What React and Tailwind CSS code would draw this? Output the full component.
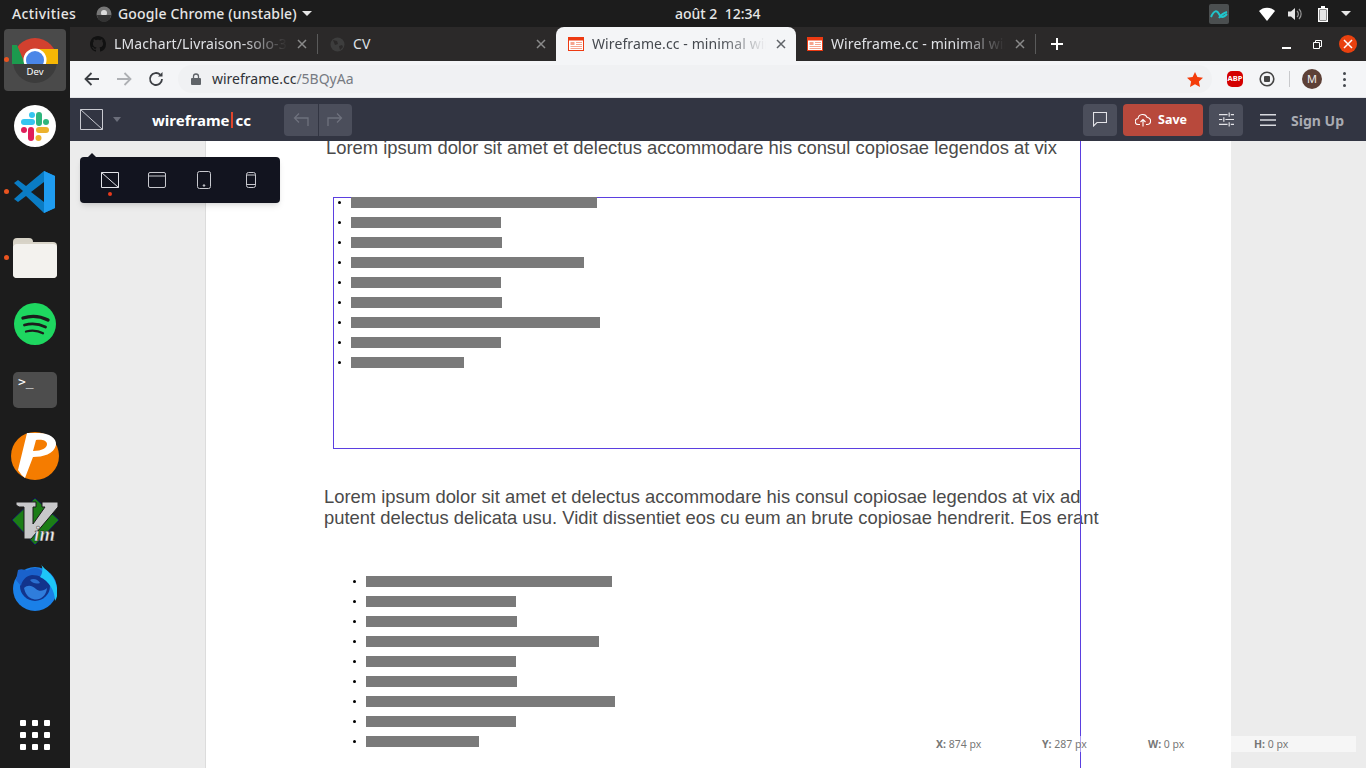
import React from "react";

const UI = { fontFamily: '"Noto Sans", "Open Sans", sans-serif' };
const barWidths = [246, 150, 151, 233, 150, 151, 249, 150, 113];
const LOREM_ONE = "Lorem ipsum dolor sit amet et delectus accommodare his consul copiosae legendos at vix";

const ChromeDev = () => (
  <svg width="46" height="46" viewBox="0 0 46 46">
    <defs>
      <clipPath id="chromeTop">
        <rect x="0" y="0" width="46" height="27" />
      </clipPath>
    </defs>
    <circle cx="23" cy="24" r="22" fill="#3c3c3c" />
    <g clipPath="url(#chromeTop)">
      <circle cx="23" cy="23" r="22" fill="#d2402f" />
      <path d="M24 12H46V27H30z" fill="#f6b705" />
      <path d="M5 8L13 27H0V8z" fill="#1c9a4e" />
      <circle cx="23" cy="23" r="11.500" fill="#fff" />
      <circle cx="23" cy="23" r="9" fill="#4a86e8" />
    </g>
    <text x="23" y="37.500" textAnchor="middle" fontSize="9.500" fill="#fff" fontFamily="Noto Sans">Dev</text>
  </svg>
);

const Slack = () => (
  <svg width="42" height="42" viewBox="0 0 42 42">
    <circle cx="21" cy="21" r="21" fill="#fff" />
    <rect x="22" y="7" width="6" height="14" rx="3" fill="#2eb67d" />
    <circle cx="32" cy="17" r="3" fill="#2eb67d" />
    <rect x="7" y="14" width="14" height="6" rx="3" fill="#36c5f0" />
    <circle cx="18" cy="10" r="3" fill="#36c5f0" />
    <rect x="22" y="22" width="13" height="6" rx="3" fill="#ecb22e" />
    <circle cx="24.500" cy="33" r="3" fill="#ecb22e" />
    <rect x="14" y="22" width="6" height="14" rx="3" fill="#e01e5a" />
    <circle cx="10" cy="25" r="3" fill="#e01e5a" />
  </svg>
);

const VsCode = () => (
  <svg width="44" height="44" viewBox="0 0 44 44">
    <path d="M31 1l11 5v32l-11 5-18-17-8 6-4-3 9-8-9-8 4-3 8 6z" fill="#0a7cc4" />
    <path d="M31 1l11 5v32l-11 5z" fill="#1f9cf0" />
    <path d="M31 12v20l-13-10z" fill="#1c1c1c" />
  </svg>
);

const Files = () => (
  <svg width="46" height="42" viewBox="0 0 46 42">
    <path d="M1 5a4 4 0 0 1 4-4h12a4 4 0 0 1 4 4v3H1z" fill="#d6d2c6" />
    <rect x="1" y="5" width="44" height="36" rx="4" fill="#d8d4c8" />
    <rect x="1" y="7" width="44" height="34" rx="4" fill="#f3f2ee" />
  </svg>
);

const Spotify = () => (
  <svg width="42" height="42" viewBox="0 0 42 42" fill="none" strokeLinecap="round">
    <circle cx="21" cy="21" r="21" fill="#1ed760" />
    <path d="M9 15c8-2.500 17-2 25 2" stroke="#1c1c1c" strokeWidth="3.400" />
    <path d="M10.500 22c7-2 14-1.500 21 2" stroke="#1c1c1c" strokeWidth="2.800" />
    <path d="M12 28.500c6-1.500 12-1 17 1.800" stroke="#1c1c1c" strokeWidth="2.300" />
  </svg>
);

const Terminal = () => (
  <div className="w-[44px] h-[36px] rounded-[5px] bg-[#4d4d4d] pl-[5px] pt-[1px] text-[13px] leading-[17px] text-white" style={{ fontFamily: '"DejaVu Sans Mono", monospace' }}>
    &gt;_
  </div>
);

const PIcon = () => (
  <svg width="48" height="48" viewBox="0 0 48 48">
    <circle cx="24" cy="24" r="24" fill="#f57c00" />
    <path d="M16 1L7 38Q10 43 14 46L22 25C32 25 43 22 45 13C46 6 38 1 28 1z" fill="#fff" />
    <path d="M25 8L22 19C31 19 36 16 36 12C36 8 30 7 25 8z" fill="#f57c00" />
  </svg>
);

const Vim = () => (
  <svg width="48" height="48" viewBox="0 0 48 48">
    <path d="M24 0L48 22 24 47 1 22z" fill="#1b7d16" stroke="#12185c" strokeWidth="1" />
    <path d="M5 4H25V9H22V26L34 9H31V4H47V9L20 41H13V9H8L5 7z" fill="#c8c8ca" stroke="#1a1a1a" strokeWidth="1" />
    <text x="23" y="43" fontSize="20" fontWeight="700" fontStyle="italic" fontFamily="Liberation Serif" fill="#e8e8e8" stroke="#111" strokeWidth="0.400">im</text>
  </svg>
);

const Firefox = () => (
  <svg width="44" height="48" viewBox="0 0 44 48">
    <circle cx="22" cy="25" r="22" fill="#1a80e8" />
    <circle cx="22" cy="22" r="15" fill="#12348c" />
    <path d="M5 6C10 4 12 7 15 6C20 3 26 3 30 8L36 20C32 14 26 11 19 11C13 12 9 16 8 22L3 16z" fill="#1a62cc" />
    <path d="M28 0C30 5 42 10 44 24C45 30 44 34 42 37C42 27 36 17 27 13C30 9 30 4 28 0z" fill="#1ec6f7" />
    <path d="M11 24C15 20 20 22 23 25C26 28 31 27 34 24C33 33 26 37 20 35C15 34 12 29 11 24z" fill="#2f7ddc" />
    <path d="M17 16C20 14 25 15 27 19C24 20 20 20 17 16z" fill="#2b6fd0" />
  </svg>
);

const dockIcons = [<ChromeDev />, <Slack />, <VsCode />, <Files />, <Spotify />, <Terminal />, <PIcon />, <Vim />, <Firefox />];

const Dock = () => (
  <aside className="w-[70px] bg-[#1c1c1c] flex flex-col shrink-0 relative">
    {dockIcons.map((icon, i) => (
      <div key={i} className="relative h-[66px] flex items-center justify-center">
        {i === 0 && <div className="absolute left-[4px] top-[2px] w-[62px] h-[62px] rounded-[4px] bg-[#4a4a4a]" />}
        {(i === 0 || i === 2 || i === 3) && <div className="absolute z-10 left-[4px] top-[30px] w-[5px] h-[5px] rounded-full bg-[#e95420]" />}
        <div className="relative">{icon}</div>
      </div>
    ))}
    <div className="mt-auto h-[66px] flex items-center justify-center">
      <div className="grid grid-cols-3 gap-[6px]">
        {[...Array(9)].map((_, i) => (
          <div key={i} className="w-[6px] h-[6px] rounded-[1px] bg-white" />
        ))}
      </div>
    </div>
  </aside>
);

const TopBar = () => (
  <header className="h-[27px] bg-[#1c1c1c] flex items-center text-[14px] text-[#e6e6e6] font-medium shrink-0" style={UI}>
    <div className="w-[675px] flex items-center shrink-0">
      <span className="ml-[12px] w-[84px] tracking-[0.4px]">Activities</span>
      <svg width="16" height="16" viewBox="0 0 16 16" className="mr-[6px]">
        <circle cx="8" cy="8" r="7.500" fill="#777" />
        <circle cx="8" cy="7" r="3" fill="#ddd" />
        <path d="M1 9h14a7 7 0 0 1-14 0z" fill="#333" />
      </svg>
      <span className="tracking-[0.15px]">Google Chrome (unstable)</span>
      <div className="ml-[5px] w-0 h-0 border-x-[5px] border-x-transparent border-t-[5px] border-t-[#e6e6e6]" />
    </div>
    <span>août 2&nbsp; 12:34</span>
    <div className="ml-auto flex items-center">
      <svg width="20" height="20" viewBox="0 0 20 20">
        <rect width="20" height="20" rx="2" fill="#4b4f50" />
        <path d="M2 13c3-7 6-7 8-3s4 4 8 0M10 14c2-3 4-5 8-6" fill="none" stroke="#20c6cc" strokeWidth="2" />
      </svg>
      <svg width="16" height="14" viewBox="0 0 16 14" className="ml-[30px]">
        <path d="M0 4c4-4.500 12-4.500 16 0l-8 10z" fill="#fff" />
      </svg>
      <svg width="15" height="14" viewBox="0 0 15 14" className="ml-[13px]">
        <path d="M0 4.500h3L7 1v12L3 9.500H0z" fill="#e6e6e6" />
        <path d="M9 4a4 4 0 0 1 0 6M11 2a7 7 0 0 1 0 10" fill="none" stroke="#999" strokeWidth="1.200" />
      </svg>
      <svg width="10" height="16" viewBox="0 0 10 16" className="ml-[15px]">
        <path d="M3 0h4v2h3v14H0V2h3z" fill="#fff" />
        <rect x="1.500" y="3.500" width="7" height="11" fill="#1c1c1c" />
        <rect x="2" y="4" width="6" height="10" fill="#e6e6e6" />
      </svg>
      <div className="ml-[13px] mr-[15px] w-0 h-0 border-x-[5px] border-x-transparent border-t-[5px] border-t-[#e6e6e6]" />
    </div>
  </header>
);

const Favicon = () => (
  <svg width="16" height="14" viewBox="0 0 16 14" className="shrink-0">
    <rect x="0.500" y="0.500" width="15" height="13" fill="#fff" stroke="#ed3a12" />
    <rect x="1" y="1" width="14" height="2.500" fill="#ed3a12" />
    <rect x="2.500" y="5" width="4" height="3" fill="#f5a58f" />
    <path d="M8 5.500h6M8 7.500h6M2.500 9.500h11.500M2.500 11.500h11.500" stroke="#f5a58f" strokeWidth="1" />
  </svg>
);

const CloseX = ({ color = "#9a9a9a" }) => (
  <svg width="10" height="10" viewBox="0 0 10 10" className="shrink-0">
    <path d="M1 1l8 8M9 1l-8 8" stroke={color} strokeWidth="1.500" />
  </svg>
);

const Tab = ({ className, icon, title, active, fade = true }) => (
  <div className={`relative h-[34px] flex items-center shrink-0 ${active ? "bg-[#f4f5f7] rounded-t-[8px] text-[#45494f]" : "text-[#dfe1e5]"} ${className}`}>
    {icon}
    <span className={`ml-[8px] pb-[1px] flex-1 min-w-0 whitespace-nowrap overflow-hidden text-[14px] tracking-[0.1px] ${fade ? "[mask-image:linear-gradient(to_right,black_72%,transparent_98%)]" : ""}`}>{title}</span>
    <div className="ml-[6px] mr-[10px]">
      <CloseX color={active ? "#5f6368" : "#8a8a8a"} />
    </div>
  </div>
);

const TabStrip = () => (
  <div className="h-[34px] bg-[#2b2929] flex items-center shrink-0" style={UI}>
    <Tab
      className="w-[247px] pl-[20px]"
      title="LMachart/Livraison-solo-3"
      icon={
        <svg width="16" height="16" viewBox="0 0 16 16" className="shrink-0">
          <path fill="#111" d="M8 0C3.580 0 0 3.580 0 8c0 3.540 2.290 6.530 5.470 7.590.4.070.55-.17.55-.38 0-.19-.01-.82-.01-1.490-2.010.37-2.530-.49-2.690-.94-.09-.23-.48-.94-.82-1.130-.28-.15-.68-.52-.01-.53.63-.01 1.080.58 1.230.82.72 1.210 1.870.87 2.330.66.070-.52.28-.87.51-1.070-1.780-.2-3.640-.89-3.640-3.950 0-.87.31-1.590.82-2.150-.08-.2-.36-1.020.08-2.120 0 0 .67-.21 2.200.82.64-.18 1.320-.27 2-.27s1.360.09 2 .27c1.530-1.040 2.200-.82 2.200-.82.44 1.100.16 1.920.08 2.120.51.56.82 1.270.82 2.150 0 3.070-1.870 3.750-3.650 3.950.29.25.54.73.54 1.480 0 1.070-.01 1.930-.01 2.200 0 .21.15.46.55.38A8.010 8.010 0 0 0 16 8c0-4.420-3.580-8-8-8z" />
        </svg>
      }
    />
    <div className="w-px h-[20px] bg-[#5a5a5a]" />
    <Tab
      className="w-[238px] pl-[12px]"
      fade={false}
      title="CV"
      icon={
        <svg width="15" height="15" viewBox="0 0 15 15" className="shrink-0">
          <circle cx="7.500" cy="7.500" r="7" fill="#3d3d3d" />
          <path d="M3 3l4 1 1 3-3 1zM9 9l3-1 1 2-3 3z" fill="#2b2929" />
        </svg>
      }
    />
    <Tab className="w-[240px] pl-[12px]" active icon={<Favicon />} title="Wireframe.cc - minimal wireframing" />
    <Tab className="w-[239px] pl-[11px]" icon={<Favicon />} title="Wireframe.cc - minimal wireframing" />
    <div className="w-px h-[20px] bg-[#5a5a5a]" />
    <svg width="12" height="12" viewBox="0 0 12 12" className="ml-[15px]">
      <path d="M6 0v12M0 6h12" stroke="#fff" strokeWidth="2" />
    </svg>
    <div className="ml-auto flex items-center">
      <div className="w-[9px] h-[1.500px] bg-white mt-[8px]" />
      <svg width="9" height="9" viewBox="0 0 9 9" className="ml-[22px]">
        <path d="M0.500 2.500h6v6h-6zM2.500 2.500v-2h6v6h-2" fill="none" stroke="#fff" />
      </svg>
      <div className="ml-[17px] mr-[9px] w-[18px] h-[18px] rounded-full bg-[#e9410f] flex items-center justify-center">
        <CloseX color="#fff" />
      </div>
    </div>
  </div>
);

const AddressBar = () => (
  <div className="h-[37px] bg-[#f4f5f7] border-b border-[#e2e3e6] flex items-center shrink-0" style={UI}>
    <svg width="16" height="14" viewBox="0 0 16 14" className="ml-[14px]" fill="none" stroke="#3c3f44" strokeWidth="1.800">
      <path d="M15 7H2M7.500 1L1.500 7l6 6" />
    </svg>
    <svg width="16" height="14" viewBox="0 0 16 14" className="ml-[16px]" fill="none" stroke="#aeb0b4" strokeWidth="1.800">
      <path d="M1 7h13M8.500 1l6 6-6 6" />
    </svg>
    <svg width="16" height="16" viewBox="0 0 16 16" className="ml-[16px]" fill="none" stroke="#3c3f44" strokeWidth="1.800">
      <path d="M14 8a6 6 0 1 1-1.800-4.300" />
      <path d="M14.500 1v4.500H10" fill="#3c3f44" stroke="none" />
    </svg>
    <div className="ml-[14px] w-[1034px] h-[28px] rounded-full bg-[#f0f1f3] flex items-center">
      <svg width="10" height="12" viewBox="0 0 10 12" className="ml-[13px]">
        <path d="M2.500 5V3.500a2.500 2.500 0 0 1 5 0V5" fill="none" stroke="#5f6368" strokeWidth="1.300" />
        <rect y="5" width="10" height="7" rx="1" fill="#5f6368" />
      </svg>
      <span className="ml-[11px] pb-[1px] text-[14px] text-[#2f3237]">
        wireframe.cc<span className="text-[#777b82]">/5BQyAa</span>
      </span>
      <svg width="16" height="15" viewBox="0 0 16 15" className="ml-auto mr-[9px]">
        <path d="M8 0l2.400 5 5.600.700-4.100 3.800 1.100 5.500L8 12.300 3 15l1.100-5.500L0 5.700 5.600 5z" fill="#f43c0a" />
      </svg>
    </div>
    <div className="ml-[15px] w-[16px] h-[16px] bg-[#d40000] rounded-[5px] flex items-center justify-center text-[7.500px] font-bold text-white leading-none">ABP</div>
    <svg width="16" height="16" viewBox="0 0 16 16" className="ml-[16px]">
      <circle cx="8" cy="8" r="6.800" fill="none" stroke="#444" strokeWidth="1.600" />
      <rect x="5" y="5" width="6" height="6" rx="1" fill="#444" />
    </svg>
    <div className="ml-[14px] w-px h-[16px] bg-[#c8c9cc]" />
    <div className="ml-[12px] w-[20px] h-[20px] rounded-full bg-[#5d4037] flex items-center justify-center text-[11px] text-[#ececec]">M</div>
    <div className="ml-[21px] flex flex-col gap-[3px]">
      <div className="w-[3px] h-[3px] rounded-full bg-[#45494f]" />
      <div className="w-[3px] h-[3px] rounded-full bg-[#45494f]" />
      <div className="w-[3px] h-[3px] rounded-full bg-[#45494f]" />
    </div>
  </div>
);

const AppBar = () => (
  <div className="h-[43px] bg-[#323542] flex items-center shrink-0" style={UI}>
    <svg width="24" height="22" viewBox="0 0 24 22" className="ml-[10px]" fill="none" stroke="#c9cad0" strokeWidth="1">
      <path d="M0.500 0.500h22v20H0.500zM0.500 0.500l22 20" />
    </svg>
    <div className="ml-[9px] w-0 h-0 border-x-[4px] border-x-transparent border-t-[5px] border-t-[#6b6e7a]" />
    <div className="ml-[31px] w-[132px] pt-[1px] flex items-center text-[15px] font-bold text-white">
      wireframe
      <div className="w-[2px] h-[16px] mx-[2px] bg-[#e0452c]" />
      cc
    </div>
    <div className="flex h-[32px] w-[68px] rounded-[4px] bg-[#4b4e5b]">
      <div className="flex-1 flex items-center justify-center border-r border-[#323542]">
        <svg width="16" height="14" viewBox="0 0 16 14" fill="none" stroke="#6e717d" strokeWidth="1.300">
          <path d="M15 13V5H1.500M6 0.500L1.500 5 6 9.500" />
        </svg>
      </div>
      <div className="flex-1 flex items-center justify-center">
        <svg width="16" height="14" viewBox="0 0 16 14" fill="none" stroke="#6e717d" strokeWidth="1.300">
          <path d="M1 13V5h13.500M10 0.500L14.500 5 10 9.500" />
        </svg>
      </div>
    </div>
    <div className="ml-auto flex items-center h-[32px]">
      <div className="w-[34px] h-full rounded-[4px] bg-[#4b4e5b] flex items-center justify-center">
        <svg width="14" height="15" viewBox="0 0 14 15" fill="none" stroke="#e4e4e8" strokeWidth="1.100">
          <path d="M0.500 0.500h13v10H4L0.500 14z" />
        </svg>
      </div>
      <div className="ml-[6px] w-[80px] h-full rounded-[4px] bg-[#b8493c] flex items-center text-[12.500px] font-bold text-white">
        <svg width="16" height="14" viewBox="0 0 16 14" fill="none" stroke="#fff" strokeWidth="1.100" className="ml-[12px]">
          <path d="M5 11.500H3.500a3 3 0 0 1-.5-6 4.800 4.800 0 0 1 9.200-1 3.500 3.500 0 0 1-.2 7H11M8 13.500V7M5.500 9L8 6.500 10.500 9" />
        </svg>
        <span className="ml-[7px] pt-[2px]">Save</span>
      </div>
      <div className="ml-[6px] w-[34px] h-full rounded-[4px] bg-[#4b4e5b] flex items-center justify-center">
        <svg width="15" height="15" viewBox="0 0 14 14" fill="none" stroke="#e4e4e8" strokeWidth="1.100">
          <path d="M0 2.500h8M11 2.500h3M0 7h3M6 7h8M0 11.500h8M11 11.500h3M9.500 0.500v4M4.500 5v4M9.500 9.500v4" />
        </svg>
      </div>
      <svg width="16" height="12" viewBox="0 0 16 12" className="ml-[17px]" fill="none" stroke="#d8d9de" strokeWidth="1.500">
        <path d="M0 0.800h16M0 6h16M0 11.200h16" />
      </svg>
      <span className="ml-[15px] mr-[22px] pt-[1px] text-[14px] font-bold text-[#a9abb2]">Sign Up</span>
    </div>
  </div>
);

// positioned on the wireframe canvas, coordinates are the content here
const BarList = ({ className }) => (
  <ul className={`absolute flex flex-col gap-[9px] ${className}`}>
    {barWidths.map((w, i) => (
      <li key={i} className="flex items-center h-[11px]">
        <div className="w-[3px] h-[3px] ml-[1px] rounded-full bg-black mr-[10px]" />
        <div className="h-[11px] bg-[#7a7a7a]" style={{ width: w }} />
      </li>
    ))}
  </ul>
);

const TextNode = ({ className, lines }) => (
  <div className={`absolute text-[18.400px] leading-[21px] text-[#4a4a4a] whitespace-nowrap ${className}`} style={{ fontFamily: '"Liberation Sans", Arial, sans-serif' }}>
    {lines.map((l) => (
      <div key={l}>{l}</div>
    ))}
  </div>
);

const ToolPopup = () => (
  <div className="absolute left-[10px] top-[16px] w-[200px] h-[46px] rounded-[4px] bg-[#12141f] pl-[6px] grid grid-cols-[repeat(4,47px)] items-center justify-items-center shadow-md z-20">
    <div className="absolute left-[8px] -top-[4px] w-0 h-0 border-x-[4px] border-x-transparent border-b-[4px] border-b-[#12141f]" />
    <div className="relative flex">
      <svg width="18" height="16" viewBox="0 0 18 16" fill="none" stroke="#e2e3e8" strokeWidth="1">
        <path d="M0.500 0.500h17v15H0.500zM0.500 0.500l17 15" />
      </svg>
      <div className="absolute left-[7px] top-[20px] w-[4px] h-[4px] rounded-full bg-[#e8391c]" />
    </div>
    <svg width="18" height="16" viewBox="0 0 18 16" fill="none" stroke="#c8c9cf" strokeWidth="1">
      <rect x="0.500" y="0.500" width="17" height="15" rx="1.500" />
      <path d="M0.500 4h17" />
    </svg>
    <svg width="14" height="18" viewBox="0 0 14 18" fill="none" stroke="#c8c9cf" strokeWidth="1">
      <rect x="0.500" y="0.500" width="13" height="17" rx="2" />
      <circle cx="7" cy="14.500" r="0.800" fill="#c8c9cf" />
    </svg>
    <svg width="10" height="16" viewBox="0 0 10 16" fill="none" stroke="#c8c9cf" strokeWidth="1">
      <rect x="0.500" y="0.500" width="9" height="15" rx="2" />
      <path d="M0.500 3h9M0.500 12.500h9" />
    </svg>
  </div>
);

const Canvas = () => (
  <main className="relative flex-1 bg-[#ececec] overflow-hidden">
    <div className="absolute left-[135px] top-0 w-[1026px] h-full bg-white border-l border-[#dcdcdc]">
      <TextNode className="left-[120px] -top-[4px]" lines={[LOREM_ONE]} />
      <div className="absolute left-[127px] top-[56px] w-[747px] h-[252px] border border-[#5b3fe0] border-r-0" />
      <BarList className="left-[131px] top-[56px]" />
      <TextNode
        className="left-[118px] top-[345px]"
        lines={[
          "Lorem ipsum dolor sit amet et delectus accommodare his consul copiosae legendos at vix ad",
          "putent delectus delicata usu. Vidit dissentiet eos cu eum an brute copiosae hendrerit. Eos erant",
        ]}
      />
      <BarList className="left-[146px] top-[435px]" />
      <div className="absolute left-[874px] top-0 w-px h-full bg-[#5b3fe0]" />
    </div>
    <ToolPopup />
    <div className="absolute right-[10px] bottom-[16px] w-[424px] h-[16px] pt-[1px] bg-white/50 grid grid-cols-4 items-center text-[10.500px] text-[#777]" style={UI}>
      {[["X:", "874 px"], ["Y:", "287 px"], ["W:", "0 px"], ["H:", "0 px"]].map(([k, v]) => (
        <div key={k} className="pl-[4px] whitespace-nowrap">
          <b>{k}</b> {v}
        </div>
      ))}
    </div>
  </main>
);

export default function App() {
  return (
    <div className="w-[1366px] h-[768px] flex flex-col overflow-hidden">
      <TopBar />
      <div className="flex flex-1 min-h-0">
        <Dock />
        <div className="flex-1 min-w-0 flex flex-col">
          <TabStrip />
          <AddressBar />
          <AppBar />
          <Canvas />
        </div>
      </div>
    </div>
  );
}
